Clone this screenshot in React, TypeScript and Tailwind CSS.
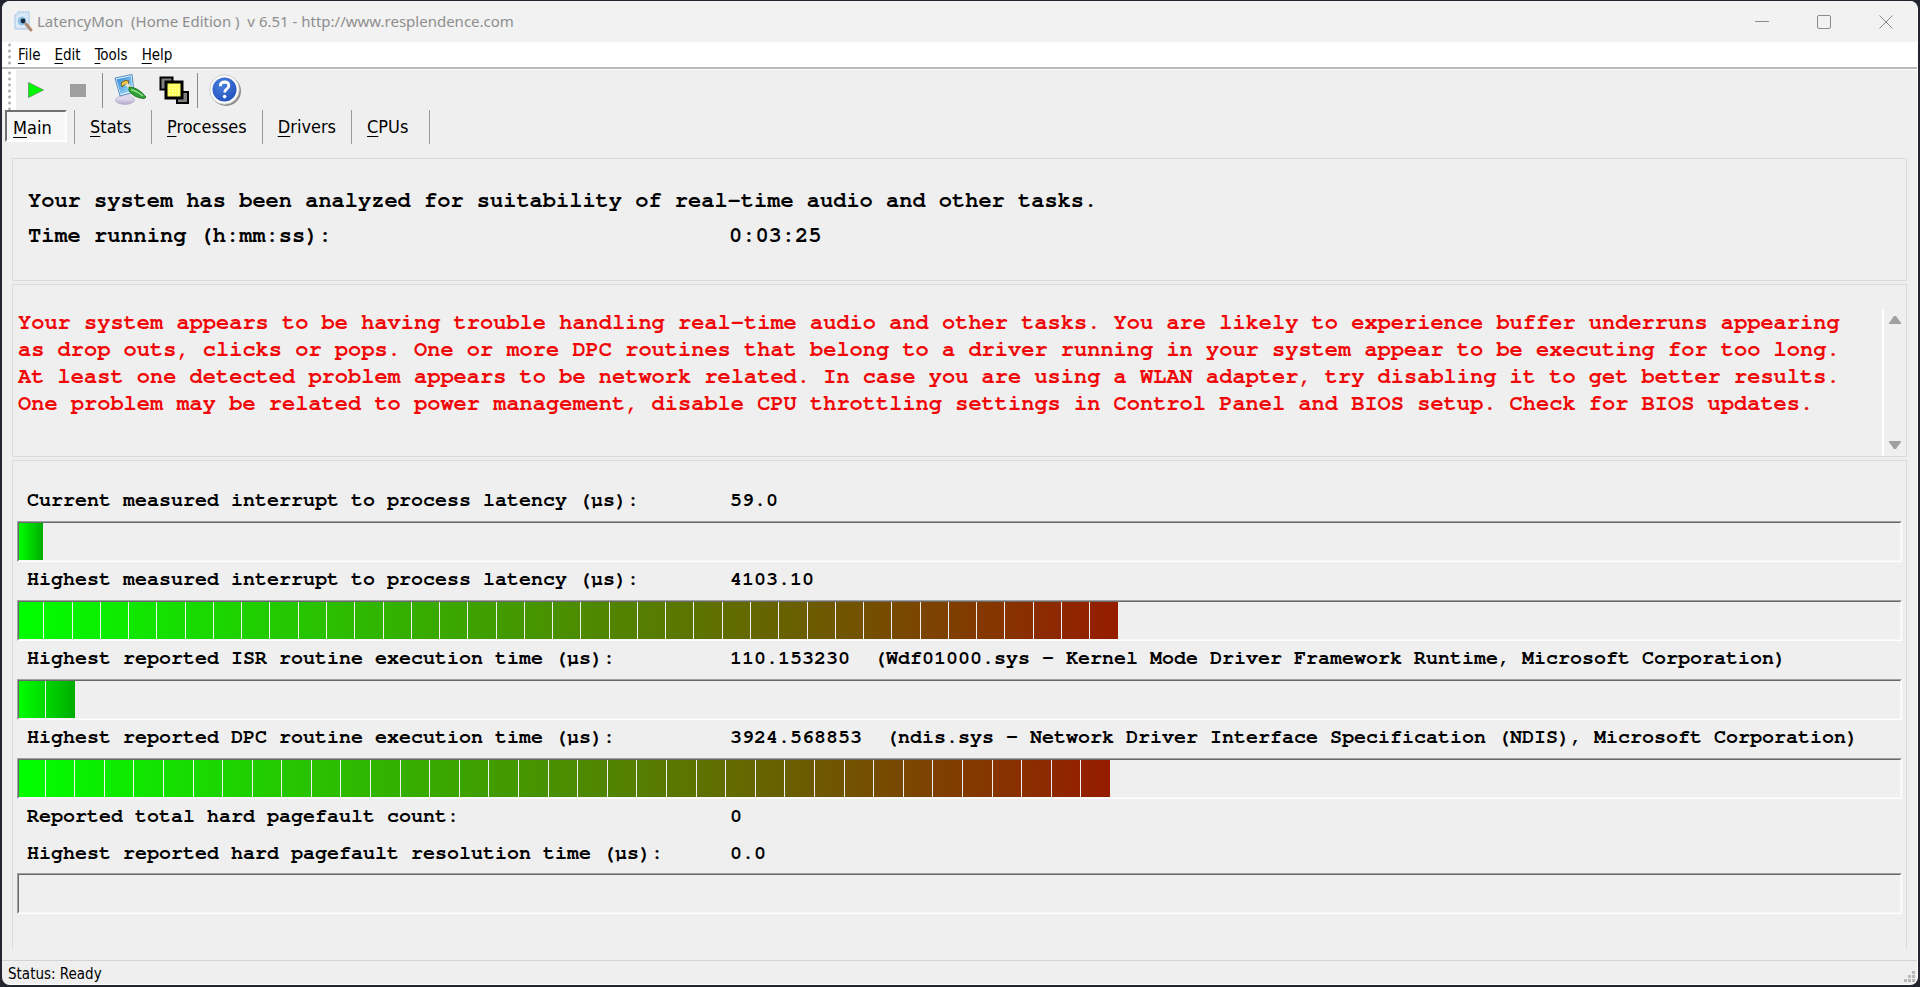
import { clsx } from 'clsx';

const readings = [
  { label: 'Current measured interrupt to process latency (µs):', value: '59.0', percent: 1.3, segments: 1 },
  { label: 'Highest measured interrupt to process latency (µs):', value: '4103.10', percent: 58.4, segments: 39 },
  {
    label: 'Highest reported ISR routine execution time (µs):',
    value: '110.153230',
    detail: '(Wdf01000.sys - Kernel Mode Driver Framework Runtime, Microsoft Corporation)',
    percent: 3,
    segments: 2,
  },
  {
    label: 'Highest reported DPC routine execution time (µs):',
    value: '3924.568853',
    detail: '(ndis.sys - Network Driver Interface Specification (NDIS), Microsoft Corporation)',
    percent: 58,
    segments: 37,
  },
];

const menus = ['File', 'Edit', 'Tools', 'Help'];
const tabs = ['Main', 'Stats', 'Processes', 'Drivers', 'CPUs'];

function AccessKey({ text }: { text: string }) {
  return (
    <>
      <span className="underline underline-offset-3 decoration-1">{text[0]}</span>
      {text.slice(1)}
    </>
  );
}

function Bar({ label, percent, segments }: { label: string; percent: number; segments: number }) {
  return (
    <div
      role="meter"
      aria-label={label}
      aria-valuenow={percent}
      className="h-[41px] border border-t-[#a0a0a0] border-l-[#a0a0a0] border-r-white border-b-white"
    >
      <div className="h-full border border-t-[#696969] border-l-[#696969] border-r-[#f6f6f6] border-b-[#f6f6f6]">
        <div
          className={clsx(
            'flex h-full bg-linear-to-r/srgb',
            segments > 2 ? 'from-[#00ff00] to-[#961c00]' : 'from-[#00ff00] to-[#00ac00]'
          )}
          style={{ width: `${percent}%` }}
        >
          {Array.from({ length: segments }, (_, i) => (
            <span key={i} className={i === 0 ? 'flex-[25]' : 'flex-[28] border-l border-[#f0f0f0]'} />
          ))}
        </div>
      </div>
    </div>
  );
}

function Row({ label, value, detail, short }: { label: string; value: string; detail?: string; short?: boolean }) {
  return (
    <div className={clsx('flex items-center whitespace-nowrap pb-1 pl-[10px]', short ? 'h-9' : 'h-[38px]')}>
      <span className="w-[703px] shrink-0">{label}</span>
      <span>{value}</span>
      {detail && <span className="pl-6">{detail}</span>}
    </div>
  );
}

function Grip() {
  return (
    <div className="flex w-[14px] justify-center self-stretch bg-white">
      <div className="w-[3px] bg-[radial-gradient(circle,#b4b4b4_1px,#ffffff_2px)] bg-[length:3px_6px]" />
    </div>
  );
}

function AppIcon() {
  return (
    <svg width="20" height="22" viewBox="0 0 20 22">
      <path d="M4 1h11v17H1V4z" fill="#d7e8f8" stroke="#a9c6e2" />
      <path d="M1 4h3V1z" fill="#f4f9fe" stroke="#a9c6e2" strokeWidth=".6" />
      <circle cx="8" cy="10" r="5" fill="#8fc0e8" stroke="#e9f3fb" />
      <circle cx="9" cy="10" r="2.4" fill="#16283c" />
      <path d="M12 13l5 6" stroke="#b08a6c" strokeWidth="3" strokeLinecap="round" />
    </svg>
  );
}

function OptionsIcon() {
  return (
    <svg width="34" height="34" viewBox="0 0 34 34">
      <defs>
        <linearGradient id="screen" x1="0" y1="0" x2="1" y2="1">
          <stop offset="0" stopColor="#2f86d8" />
          <stop offset="1" stopColor="#a8e4fb" />
        </linearGradient>
        <linearGradient id="stand" x1="0" y1="0" x2="0" y2="1">
          <stop offset="0" stopColor="#f4f2fb" />
          <stop offset="1" stopColor="#b4a9cc" />
        </linearGradient>
      </defs>
      <ellipse cx="12" cy="27" rx="9.5" ry="4.4" fill="url(#stand)" stroke="#a79dbd" strokeWidth=".6" />
      <path d="M9 21h9l1 6H7z" fill="#dcd6ea" />
      <path d="M2 5l17-3.5 2 17.5-14 4z" fill="#e6f2fb" stroke="#2a72b4" strokeWidth=".8" />
      <path d="M3.5 6.200l14.500-3 1.600 14.600-12 3.300z" fill="url(#screen)" />
      <path d="M8 10q4-4 8-2l-1 3q-4 0-6 3z" fill="#f3c648" stroke="#5a4a1c" strokeWidth=".8" />
      <path d="M13 11l6 5" stroke="#e9e2c4" strokeWidth="3" />
      <path d="M16 14q9 0 17 10-1 2-3 1.500-9-1-14-7.500z" fill="#2f9e35" stroke="#146b1c" strokeWidth=".8" />
      <path d="M18 16.500q7 2 12 6.500" fill="none" stroke="#93e08c" strokeWidth="1.400" />
    </svg>
  );
}

function LayersIcon() {
  return (
    <svg width="31" height="31" viewBox="0 0 31 31">
      <rect x="1.5" y="2.5" width="12" height="12" fill="#808080" stroke="#000" strokeWidth="2" />
      <rect x="18" y="17" width="11" height="11" fill="#808080" stroke="#000" strokeWidth="2" />
      <rect x="7" y="7" width="16" height="16" fill="#ffff55" stroke="#000" strokeWidth="3" />
      <path
        d="M10 10.500h11M10 13.500h11M10 16.500h11M10 19.500h11"
        stroke="#ffffb0"
        strokeWidth="1.500"
        strokeDasharray="1.500 1.500"
      />
    </svg>
  );
}

function HelpIcon() {
  return (
    <svg width="34" height="34" viewBox="0 0 34 34">
      <defs>
        <radialGradient id="help" cx=".4" cy=".3" r=".8">
          <stop offset="0" stopColor="#4a80dc" />
          <stop offset="1" stopColor="#1f4fbc" />
        </radialGradient>
      </defs>
      <circle cx="18" cy="18" r="15" fill="#8c8c8c" />
      <circle cx="16.500" cy="16.500" r="14.800" fill="#fbfbfb" stroke="#c4c4c4" strokeWidth=".8" />
      <circle cx="16.500" cy="16.500" r="12" fill="url(#help)" />
      <path
        d="M12.300 13.200q.2-4.200 4.300-4.200 4.200.1 4.200 3.700 0 2-2.200 3.500-1.900 1.300-1.900 3.300"
        fill="none"
        stroke="#fff"
        strokeWidth="2.800"
      />
      <circle cx="16.600" cy="23.600" r="1.800" fill="#fff" />
    </svg>
  );
}

export default function App() {
  return (
    <div className="flex min-h-screen flex-col bg-[#24262f] px-0.5 pt-px pb-0.5 text-black">
      <div className="flex flex-1 flex-col overflow-hidden rounded-lg border-r border-b border-white bg-[#efefef] font-['DejaVu_Sans_Condensed','Noto_Sans',sans-serif]">
        <header className="flex h-[41px] items-center bg-[#f2f2f2] pl-3 font-['Noto_Sans',sans-serif]">
          <AppIcon />
          <h1 className="flex-1 whitespace-pre pl-[3px] text-[15px] text-[#8e8e8e]">
            {'LatencyMon  (Home Edition )  v 6.51 - http://www.resplendence.com'}
          </h1>
          <div className="flex text-[#8a8a8a]">
            <button aria-label="Minimize" className="flex h-10 w-[62px] items-center justify-center">
              <svg width="14" height="14" viewBox="0 0 14 14" fill="none" stroke="currentColor">
                <path d="M0 6.500h14" />
              </svg>
            </button>
            <button aria-label="Maximize" className="flex h-10 w-[62px] items-center justify-center">
              <svg width="14" height="14" viewBox="0 0 14 14" fill="none" stroke="currentColor">
                <rect x=".5" y=".5" width="13" height="13" rx="1.5" />
              </svg>
            </button>
            <button aria-label="Close" className="flex h-10 w-[62px] items-center justify-center">
              <svg width="14" height="14" viewBox="0 0 14 14" fill="none" stroke="currentColor">
                <path d="M.5.5l13 13M13.500.5l-13 13" />
              </svg>
            </button>
          </div>
        </header>

        <nav className="flex h-[27px] items-center gap-[14px] border-b-2 border-[#b9b9b9] bg-white text-[15px]">
          <Grip />
          {menus.map((menu, i) => (
            <button key={menu} className={clsx('pt-0.5', i === 0 && '-ml-3')}>
              <AccessKey text={menu} />
            </button>
          ))}
        </nav>

        <div className="flex h-[41px] items-center border-t border-white">
          <Grip />
          <button aria-label="Start" className="ml-3">
            <svg width="16" height="16" viewBox="0 0 16 16">
              <path d="M.5.5l15 7.500-15 7.500z" fill="#00f800" stroke="#5f8f5f" strokeWidth=".8" />
            </svg>
          </button>
          <button aria-label="Stop" className="ml-[26px] h-[13px] w-4 bg-[#9f9f9f]" />
          <div className="ml-4 h-[35px] w-px bg-[#8a8a8a]" />
          <button aria-label="Options" className="ml-[10px]"><OptionsIcon /></button>
          <button aria-label="Windows" className="ml-3"><LayersIcon /></button>
          <div className="ml-[7px] h-[35px] w-px bg-[#8a8a8a]" />
          <button aria-label="Help" className="ml-[10px]"><HelpIcon /></button>
        </div>

        <div role="tablist" className="flex h-[34px] pl-[3px] text-lg">
          {tabs.map((tab, i) => (
            <button
              key={tab}
              role="tab"
              aria-selected={i === 0}
              className={clsx(
                'text-left',
                i === 0
                  ? 'mr-[7px] h-8 w-[62px] border-2 border-t-[#707070] border-l-[#707070] border-r-white border-b-white bg-[#f7f7f7] pt-0.5 pl-[6px]'
                  : 'min-w-[78px] border-r border-[#9a9a9a] px-[15px]',
                i === 1 && 'border-l'
              )}
            >
              <AccessKey text={tab} />
            </button>
          ))}
        </div>

        <main className="flex flex-1 flex-col gap-[3px] px-[10px] pt-[14px] pb-[11px] font-['Courier_10_Pitch','FreeMono','Nimbus_Mono_PS','Courier','Liberation_Mono',monospace]">
          <section className="h-[123px] border border-[#dadada] pt-6 pl-[15px] text-[22px] leading-[35px] font-bold">
            <p>Your system has been analyzed for suitability of real-time audio and other tasks.</p>
            <p className="flex">
              <span className="w-[701px]">Time running (h:mm:ss):</span>
              <span>0:03:25</span>
            </p>
          </section>

          <section className="flex h-[173px] border border-[#dadada] pt-6">
            <p className="flex-1 overflow-hidden whitespace-nowrap pl-[5px] text-[22px] leading-[27px] font-bold text-[#f00808]">
              Your system appears to be having trouble handling real-time audio and other tasks. You are likely to experience buffer underruns appearing
              <br />
              as drop outs, clicks or pops. One or more DPC routines that belong to a driver running in your system appear to be executing for too long.
              <br />
              At least one detected problem appears to be network related. In case you are using a WLAN adapter, try disabling it to get better results.
              <br />
              One problem may be related to power management, disable CPU throttling settings in Control Panel and BIOS setup. Check for BIOS updates.
            </p>
            <div className="flex w-6 flex-col items-center justify-between border-l-2 border-white py-[6px] text-[#a0a0a0]">
              <button aria-label="Scroll up">
                <svg width="12" height="10" viewBox="0 0 12 10">
                  <path d="M5 1h2l5 7v1H0V8z" fill="currentColor" />
                </svg>
              </button>
              <button aria-label="Scroll down">
                <svg width="12" height="10" viewBox="0 0 12 10">
                  <path d="M5 9h2l5-7V1H0v1z" fill="currentColor" />
                </svg>
              </button>
            </div>
          </section>

          <section className="flex-1 border-x border-t border-[#dadada] px-1 pt-[22px] text-xl font-bold">
            {readings.map((reading) => (
              <div key={reading.label}>
                <Row label={reading.label} value={reading.value} detail={reading.detail} />
                <Bar label={reading.label} percent={reading.percent} segments={reading.segments} />
              </div>
            ))}
            <Row label="Reported total hard pagefault count:" value="0" />
            <Row label="Highest reported hard pagefault resolution time (µs):" value="0.0" short />
            <Bar label="Highest reported hard pagefault resolution time (µs):" percent={0} segments={0} />
          </section>
        </main>

        <footer className="flex h-6 items-center justify-between border-t border-[#d2d2d2] pl-[6px] text-[15px]">
          <span className="pt-1">Status: Ready</span>
          <svg width="14" height="14" viewBox="0 0 14 14" fill="#b8b8b8" className="self-end">
            <path d="M9 1h3v3H9zM5 5h3v3H5zM9 5h3v3H9zM1 9h3v3H1zM5 9h3v3H5zM9 9h3v3H9z" />
          </svg>
        </footer>
      </div>
    </div>
  );
}
